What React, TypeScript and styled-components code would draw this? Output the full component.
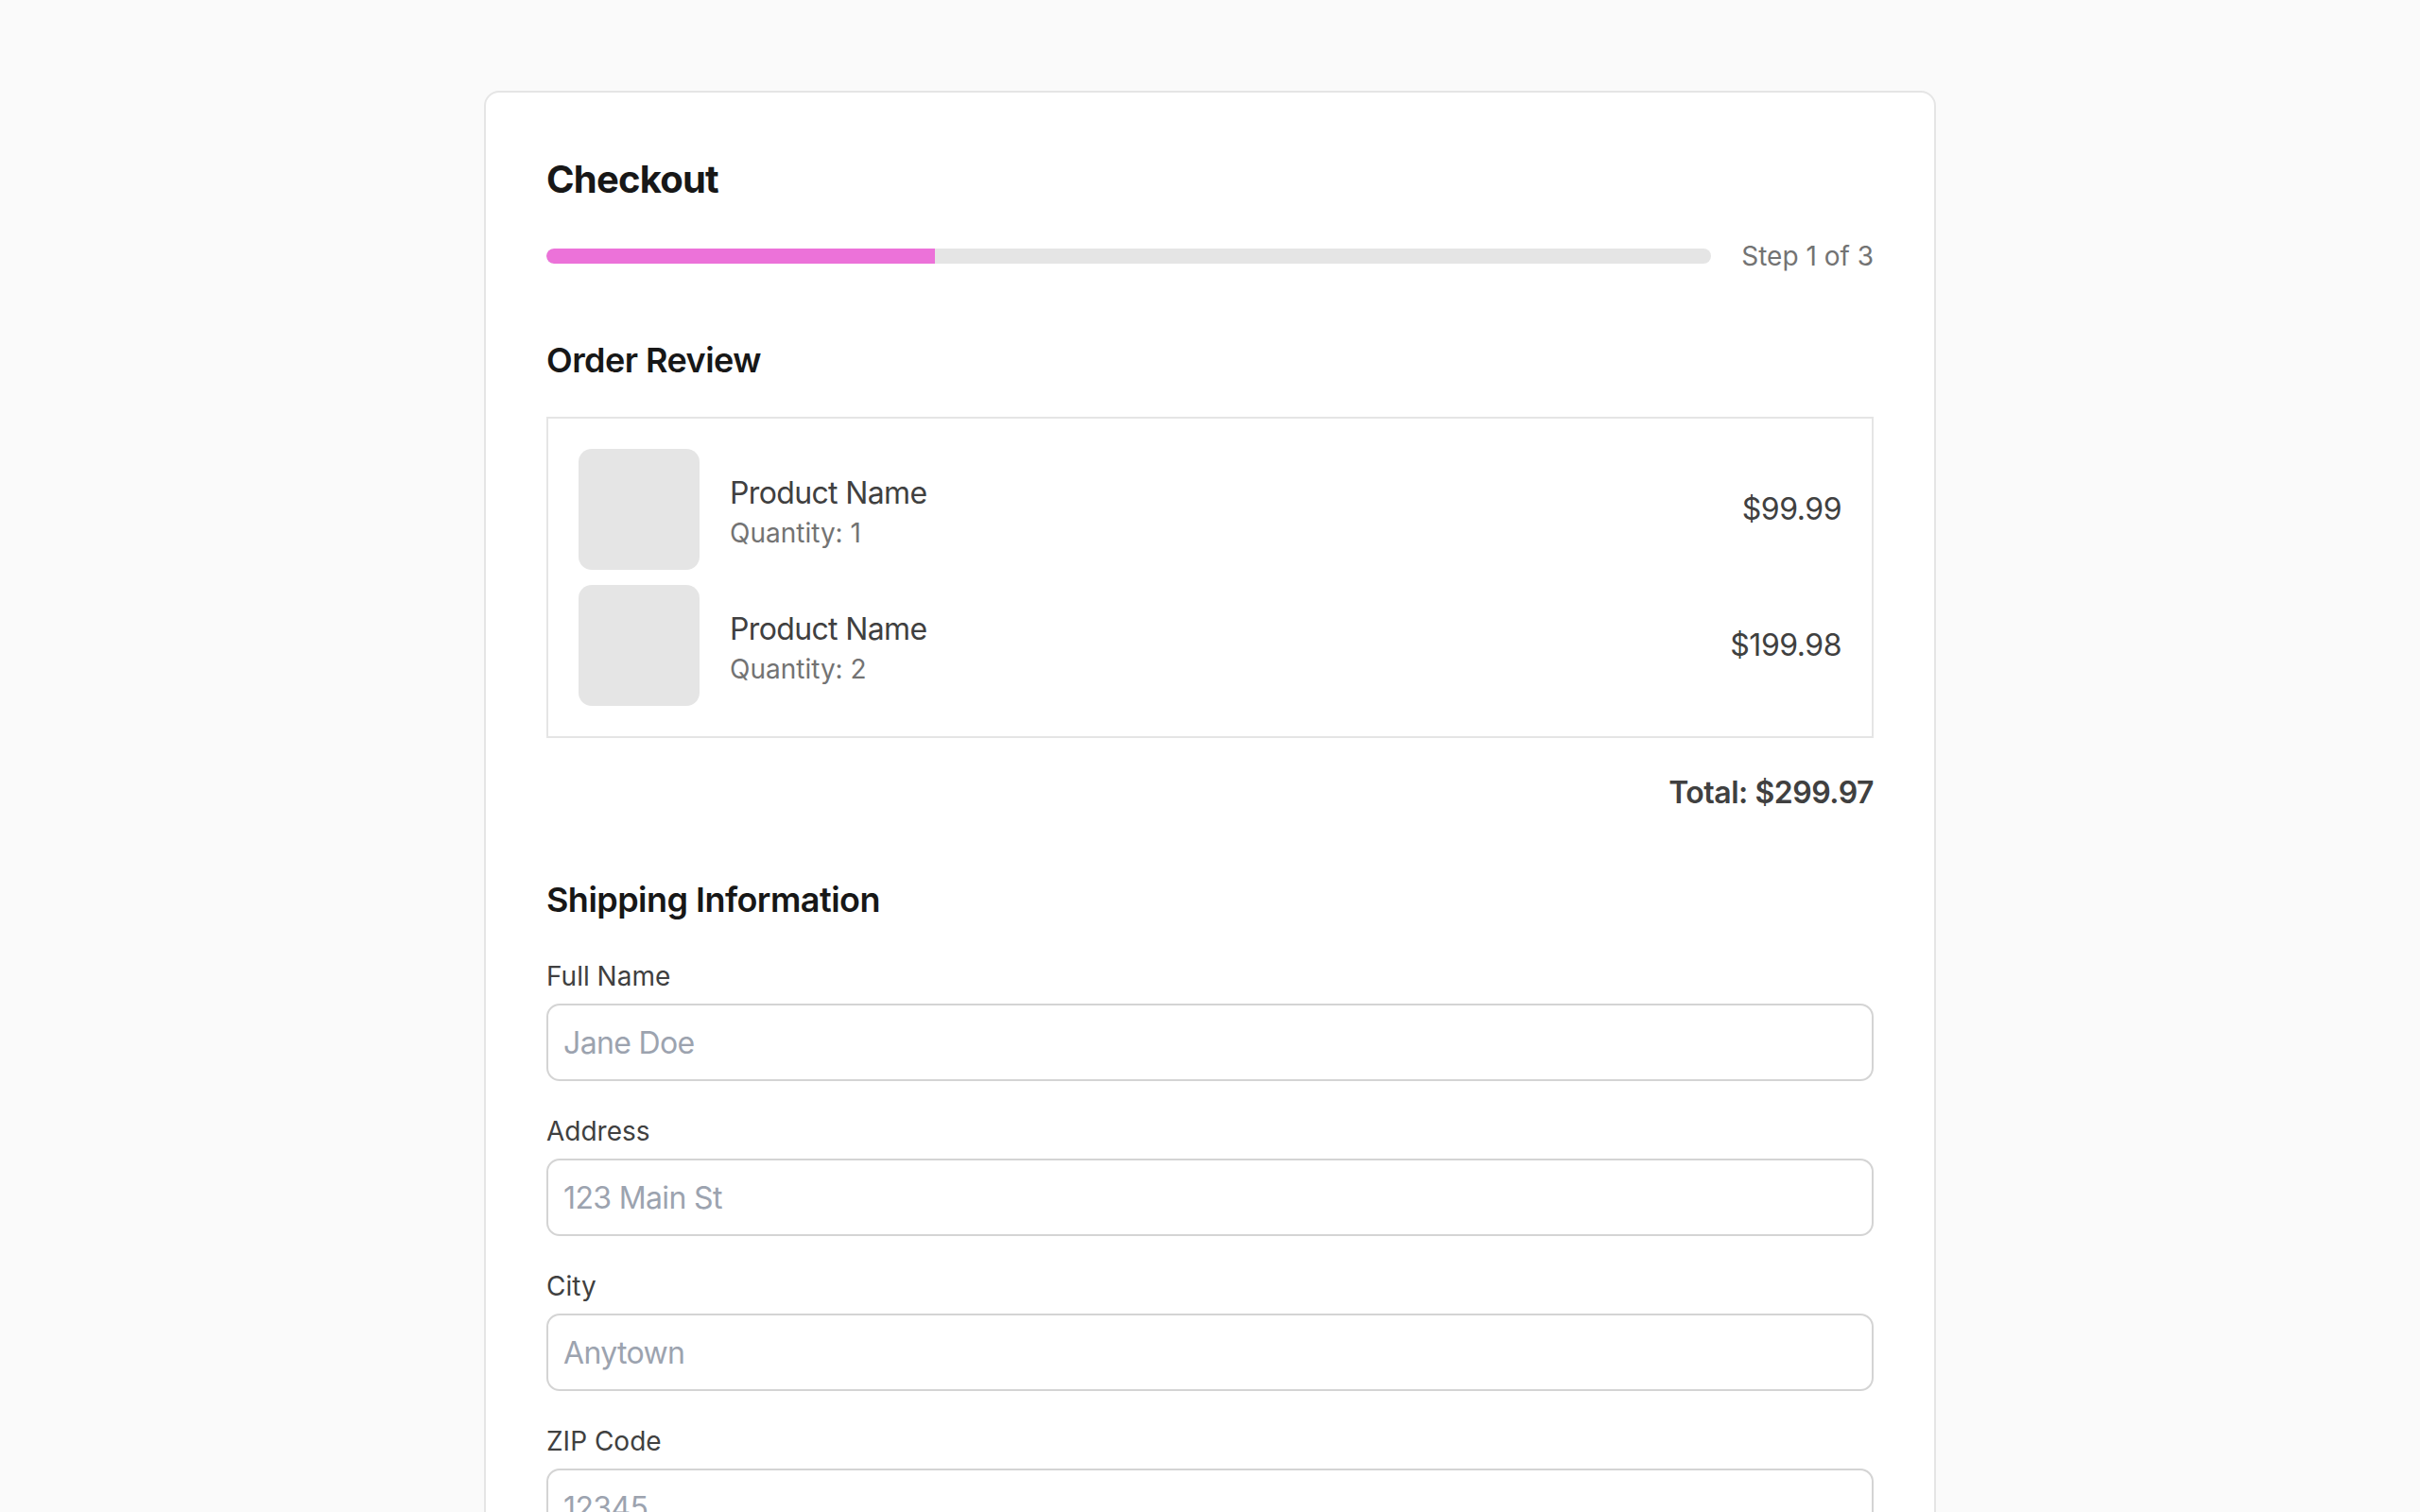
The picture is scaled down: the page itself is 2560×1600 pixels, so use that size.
import React from 'react';
import styled, { createGlobalStyle } from 'styled-components';

const GlobalStyle = createGlobalStyle`
    * {
        box-sizing: border-box;
    }

    body {
        margin: 0;
        background: #fafafa;
        font-family: 'Inter', 'Noto Sans', sans-serif;
        color: #171717;
    }
`;

const Page = styled.div`
    padding: 96px 0;
`;

const Card = styled.main`
    width: 1536px;
    margin: 0 auto;
    padding: 64px;
    background: #ffffff;
    border: 2px solid #e5e5e5;
    border-radius: 16px;
`;

const Title = styled.h1`
    margin: 0;
    font-size: 40px;
    line-height: 56px;
    font-weight: 700;
    letter-spacing: -0.02em;
    color: #171717;
`;

const ProgressRow = styled.div`
    display: flex;
    align-items: center;
    gap: 32px;
    margin-top: 32px;
`;

const Track = styled.div`
    flex: 1;
    height: 16px;
    border-radius: 8px;
    background: #e5e5e5;
    overflow: hidden;
`;

const Fill = styled.div`
    height: 100%;
    background: #ec72d9;
    border-radius: 8px 0 0 8px;
`;

const StepLabel = styled.span`
    font-size: 28px;
    line-height: 42px;
    color: #737373;
`;

const Section = styled.section`
    margin-top: 64px;
`;

const SectionTitle = styled.h2`
    margin: 0 0 35px;
    font-size: 36px;
    line-height: 50px;
    font-weight: 600;
    letter-spacing: -0.015em;
    color: #171717;
`;

const ItemList = styled.div`
    display: flex;
    flex-direction: column;
    gap: 16px;
    padding: 32px;
    border: 2px solid #e5e5e5;
`;

const Item = styled.div`
    display: flex;
    align-items: center;
    gap: 32px;
`;

const Thumb = styled.div`
    width: 128px;
    height: 128px;
    flex-shrink: 0;
    border-radius: 14px;
    background: #e5e5e5;
`;

const ItemInfo = styled.div`
    flex: 1;
    display: flex;
    flex-direction: column;
    gap: 4px;
    padding-top: 6px;
`;

const ItemName = styled.span`
    font-size: 32px;
    line-height: 40px;
    letter-spacing: -0.02em;
    color: #404040;
`;

const ItemQty = styled.span`
    font-size: 28px;
    line-height: 36px;
    color: #737373;
`;

const Price = styled.span`
    font-size: 32px;
    line-height: 48px;
    letter-spacing: -0.015em;
    color: #404040;
`;

const Total = styled.div`
    margin-top: 34px;
    text-align: right;
    font-size: 32px;
    line-height: 48px;
    font-weight: 600;
    letter-spacing: -0.015em;
    color: #404040;
`;

const Form = styled.form`
    display: flex;
    flex-direction: column;
    gap: 32px;
`;

const Field = styled.label`
    display: flex;
    flex-direction: column;
    gap: 8px;
`;

const FieldLabel = styled.span`
    font-size: 28px;
    line-height: 42px;
    color: #404040;
`;

const Input = styled.input`
    height: 82px;
    padding: 0 16px;
    border: 2px solid #d4d4d4;
    border-radius: 14px;
    font-family: inherit;
    font-size: 32px;
    letter-spacing: -0.02em;
    color: #171717;
    background: #ffffff;
    outline: none;

    &::placeholder {
        color: #9ca3af;
    }
`;

const items = [
    { name: 'Product Name', qty: 1, price: '$99.99' },
    { name: 'Product Name', qty: 2, price: '$199.98' },
];

const fields = [
    { label: 'Full Name', placeholder: 'Jane Doe' },
    { label: 'Address', placeholder: '123 Main St' },
    { label: 'City', placeholder: 'Anytown' },
    { label: 'ZIP Code', placeholder: '12345' },
];

const step = 1;
const totalSteps = 3;

const App: React.FC = () => (
    <Page>
        <GlobalStyle />
        <Card>
            <Title>Checkout</Title>

            <ProgressRow>
                <Track>
                    <Fill style={{ width: `${(step / totalSteps) * 100}%` }} />
                </Track>
                <StepLabel>
                    Step {step} of {totalSteps}
                </StepLabel>
            </ProgressRow>

            <Section>
                <SectionTitle>Order Review</SectionTitle>
                <ItemList>
                    {items.map((item, i) => (
                        <Item key={i}>
                            <Thumb />
                            <ItemInfo>
                                <ItemName>{item.name}</ItemName>
                                <ItemQty>Quantity: {item.qty}</ItemQty>
                            </ItemInfo>
                            <Price>{item.price}</Price>
                        </Item>
                    ))}
                </ItemList>
                <Total>Total: $299.97</Total>
            </Section>

            <Section>
                <SectionTitle>Shipping Information</SectionTitle>
                <Form onSubmit={e => e.preventDefault()}>
                    {fields.map(field => (
                        <Field key={field.label}>
                            <FieldLabel>{field.label}</FieldLabel>
                            <Input type="text" placeholder={field.placeholder} />
                        </Field>
                    ))}
                </Form>
            </Section>
        </Card>
    </Page>
);

export default App;
